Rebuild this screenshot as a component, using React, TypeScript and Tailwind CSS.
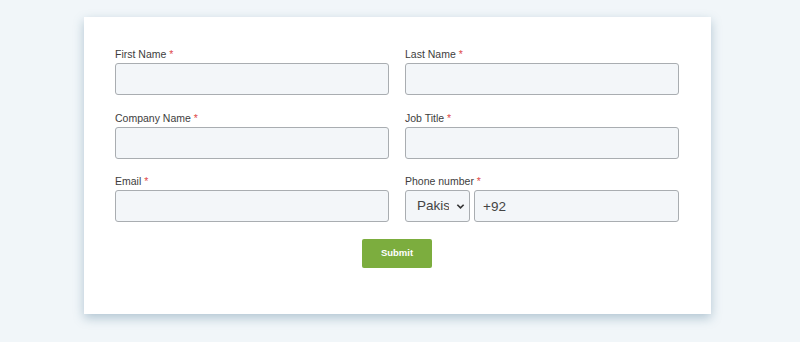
import React from "react";

const inputCls =
  "block h-8 w-full rounded-[3px] border border-[#a9adb1] bg-[#f3f6f9] px-2 text-[13.5px] text-[#444] outline-none";

function Field({ label, children }: { label: string; children?: React.ReactNode }) {
  return (
    <div className="flex flex-col">
      <label className="mb-[1px] text-[10.5px] leading-[15px] text-[#3d3d3d]">
        {label} <span className="text-[#e04b4b]">*</span>
      </label>
      {children ?? <input type="text" className={inputCls} />}
    </div>
  );
}

export default function App() {
  return (
    <div
      className="min-h-[342px] bg-[#f1f6f9] pt-[17px]"
      style={{ fontFamily: '"Liberation Sans", Arial, sans-serif' }}
    >
      <div className="ml-[84px] w-[627px] bg-white pb-[46px] pl-[31px] pr-[32px] pt-[30px] shadow-[0_4px_10px_rgba(82,126,153,0.4)]">
        <div className="grid grid-cols-2 gap-x-4 gap-y-[15.5px]">
          <Field label="First Name" />
          <Field label="Last Name" />
          <Field label="Company Name" />
          <Field label="Job Title" />
          <Field label="Email" />
          <Field label="Phone number">
            <div className="flex gap-1">
              <div className="relative w-[65px] shrink-0">
                <select
                  defaultValue="pk"
                  className="h-8 w-full appearance-none overflow-hidden rounded-[3px] border border-[#a9adb1] bg-[#f3f6f9] pl-[11px] pr-[20px] text-[13.5px] text-[#444] outline-none"
                >
                  <option value="pk">Pakistan</option>
                </select>
                {/* native-looking chevron */}
                <svg
                  viewBox="0 0 10 10"
                  className="pointer-events-none absolute right-[5px] top-[12px] h-[9px] w-[9px]"
                >
                  <path d="M1.5 3 L5 6.5 L8.5 3" fill="none" stroke="#333" strokeWidth="1.8" />
                </svg>
              </div>
              <input type="text" defaultValue="+92" className={inputCls} />
            </div>
          </Field>
        </div>
        <div className="mt-[17px] flex justify-center">
          <button
            type="button"
            className="h-[29px] w-[70px] rounded-[2px] bg-[#7cad3e] text-[9.5px] font-bold text-white"
          >
            Submit
          </button>
        </div>
      </div>
    </div>
  );
}
